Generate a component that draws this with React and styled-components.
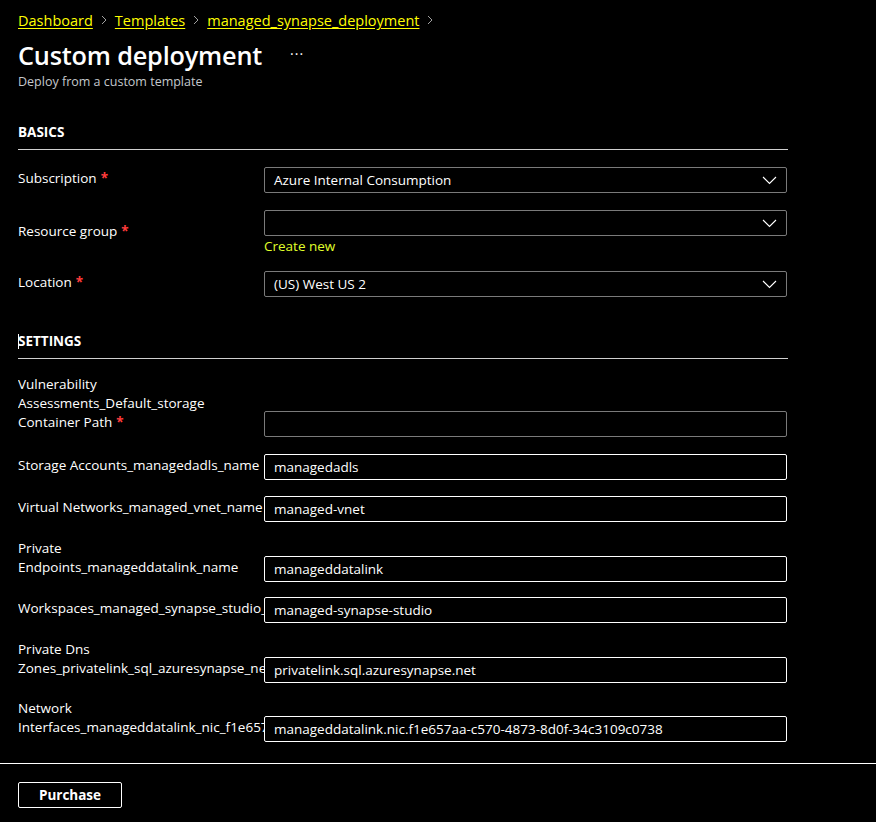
import React from 'react';
import styled, { createGlobalStyle } from 'styled-components';

const GlobalStyle = createGlobalStyle`
  html, body {
    margin: 0;
    padding: 0;
    background: #000;
  }
  body {
    font-family: "Open Sans", "Noto Sans", sans-serif;
    color: #fff;
    font-size: 13.5px;
  }
`;

const Page = styled.div`
  width: 876px;
  min-height: 822px;
  background: #000;
  display: flex;
  flex-direction: column;
`;

const Header = styled.div`
  padding: 8px 18px 0;
`;

const Crumbs = styled.nav`
  display: flex;
  align-items: center;
  gap: 7px;
  height: 24px;
  font-size: 14.5px;
`;

const Crumb = styled.a`
  color: #ffff00;
  text-decoration: underline;
  text-underline-offset: 2px;
`;

const Sep = styled.span`
  display: flex;
  align-items: center;
  color: #a0a0a0;
`;

const TitleRow = styled.div`
  display: flex;
  align-items: center;
  gap: 28px;
  margin-top: 5px;
  height: 36px;
`;

const Title = styled.h1`
  margin: 0;
  font-size: 25.3px;
  font-weight: 600;
  letter-spacing: -0.2px;
`;

const More = styled.span`
  font-size: 14px;
  letter-spacing: 1px;
  margin-top: -4px;
`;

const Subtitle = styled.div`
  font-size: 12.5px;
  color: #c4c8cc;
  line-height: 18px;
`;

const Form = styled.div`
  width: 770px;
  padding: 0 18px;
`;

const Section = styled.div`
  margin-top: ${(p) => p.top}px;
`;

const SectionTitle = styled.h2`
  position: relative;
  margin: 0;
  font-size: 13.5px;
  font-weight: 700;
  line-height: 19px;
  padding-bottom: 7px;
  border-bottom: 1px solid #d0d0d0;
`;

const Caret = styled.span`
  position: absolute;
  left: 0;
  top: 2px;
  width: 1px;
  height: 15px;
  background: #fff;
`;

const Row = styled.div`
  display: grid;
  grid-template-columns: 246px 523px;
  align-items: ${(p) => (p.end ? 'end' : 'center')};
  margin-top: ${(p) => p.gap}px;
`;

const Label = styled.div`
  line-height: 19px;
  overflow: hidden;
  padding-bottom: ${(p) => (p.end ? 5 : 3)}px;
  span {
    display: block;
    white-space: nowrap;
  }
`;

const Req = styled.b`
  color: #ff3b3b;
  font-weight: 700;
  margin-left: 4px;
`;

const Box = styled.div`
  box-sizing: border-box;
  height: 26px;
  border: 1px solid ${(p) => (p.filled ? '#fff' : '#7a7a7a')};
  border-radius: 2px;
  padding: 0 9px;
  display: flex;
  align-items: center;
  justify-content: space-between;
  white-space: nowrap;
  overflow: hidden;
`;

const Chevron = styled.svg`
  width: 15px;
  height: 9px;
  flex: none;
`;

const LinkNew = styled.div`
  color: #e0ff2a;
  line-height: 19px;
  margin-top: 1px;
`;

const Footer = styled.div`
  margin-top: 21px;
  border-top: 1px solid #fff;
  padding: 18px 18px;
`;

const Button = styled.button`
  box-sizing: border-box;
  width: 104px;
  height: 26px;
  background: #000;
  color: #fff;
  border: 1px solid #fff;
  border-radius: 2px;
  font-family: "Open Sans", sans-serif;
  font-weight: 700;
  font-size: 13.5px;
`;

const ChevronRight = () => (
  <svg width="8" height="10" viewBox="0 0 8 10">
    <polyline points="2,1 6,5 2,9" fill="none" stroke="#a0a0a0" strokeWidth="1" />
  </svg>
);

const Down = () => (
  <Chevron viewBox="0 0 15 9">
    <polyline points="1,1 7.5,7.5 14,1" fill="none" stroke="#fff" strokeWidth="1.1" />
  </Chevron>
);

const settings = [
  { lines: ['Vulnerability', 'Assessments_Default_storage', 'Container Path'], req: true, value: '', gap: 16 },
  { lines: ['Storage Accounts_managedadls_name'], value: 'managedadls', gap: 17 },
  { lines: ['Virtual Networks_managed_vnet_name'], value: 'managed-vnet', gap: 16 },
  { lines: ['Private', 'Endpoints_manageddatalink_name'], value: 'manageddatalink', gap: 17 },
  { lines: ['Workspaces_managed_synapse_studio_name'], value: 'managed-synapse-studio', gap: 15 },
  { lines: ['Private Dns', 'Zones_privatelink_sql_azuresynapse_net_name'], value: 'privatelink.sql.azuresynapse.net', gap: 17 },
  { lines: ['Network', 'Interfaces_manageddatalink_nic_f1e657aa_name'], value: 'manageddatalink.nic.f1e657aa-c570-4873-8d0f-34c3109c0738', gap: 16 },
];

export default function App() {
  return (
    <Page>
      <GlobalStyle />
      <Header>
        <Crumbs>
          <Crumb>Dashboard</Crumb>
          <Sep><ChevronRight /></Sep>
          <Crumb>Templates</Crumb>
          <Sep><ChevronRight /></Sep>
          <Crumb>managed_synapse_deployment</Crumb>
          <Sep><ChevronRight /></Sep>
        </Crumbs>
        <TitleRow>
          <Title>Custom deployment</Title>
          <More>···</More>
        </TitleRow>
        <Subtitle>Deploy from a custom template</Subtitle>
      </Header>

      <Form>
        <Section top={32}>
          <SectionTitle>BASICS</SectionTitle>
          <Row gap={17}>
            <Label>Subscription<Req>*</Req></Label>
            <Box><span>Azure Internal Consumption</span><Down /></Box>
          </Row>
          <Row gap={17}>
            <Label>Resource group<Req>*</Req></Label>
            <div>
              <Box><span /><Down /></Box>
              <LinkNew>Create new</LinkNew>
            </div>
          </Row>
          <Row gap={15}>
            <Label>Location<Req>*</Req></Label>
            <Box><span>(US) West US 2</span><Down /></Box>
          </Row>
        </Section>

        <Section top={35}>
          <SectionTitle><Caret />SETTINGS</SectionTitle>
          {settings.map((s, i) => (
            <Row key={i} end gap={s.gap}>
              <Label end>
                {s.lines.map((l, j) => (
                  <span key={j}>
                    {l}
                    {s.req && j === s.lines.length - 1 && <Req>*</Req>}
                  </span>
                ))}
              </Label>
              <Box filled={!!s.value}>{s.value}</Box>
            </Row>
          ))}
        </Section>
      </Form>

      <Footer>
        <Button>Purchase</Button>
      </Footer>
    </Page>
  );
}
